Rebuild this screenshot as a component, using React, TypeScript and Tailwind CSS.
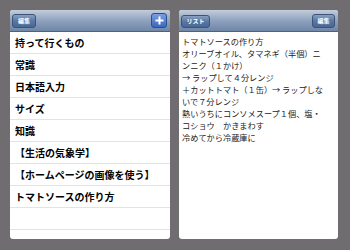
import React from "react";

const font = { fontFamily: '"Noto Sans CJK JP", "Noto Sans", sans-serif' };

function NavButton({ label, className }: { label: string; className: string }) {
  return (
    <div
      className={`flex items-center justify-center rounded-[3px] border border-[#3d5478] bg-gradient-to-b from-[#8aa0c0] via-[#5a76a3] to-[#4a6694] text-white text-[6px] font-bold leading-none ${className}`}
    >
      {label}
    </div>
  );
}

const items = [
  "持って行くもの",
  "常識",
  "日本語入力",
  "サイズ",
  "知識",
  "【生活の気象学】",
  "【ホームページの画像を使う】",
  "トマトソースの作り方",
  "",
  "",
];

const lines = [
  "トマトソースの作り方",
  "オリーブオイル、タマネギ（半個）ニ",
  "ンニク（１かけ）",
  "→ ラップして４分レンジ",
  "＋カットトマト（１缶）→ ラップしな",
  "いで７分レンジ",
  "熱いうちにコンソメスープ１個、塩・",
  "コショウ　かきまわす",
  "冷めてから冷蔵庫に",
];

export default function App() {
  return (
    <div
      className="w-[350px] h-[250px] bg-[#6f6d6f] flex gap-[9px] pt-[10px] pl-[10px]"
      style={font}
    >
      <div className="w-[160px] h-[229px] bg-white rounded-[3px] overflow-hidden flex flex-col">
        <div className="h-[22px] shrink-0 flex items-center justify-between pl-[2px] pr-[3px] bg-gradient-to-b from-[#c3cddb] via-[#8fa2be] to-[#6f86a6] border-b border-[#4d6182]">
          <NavButton label="編集" className="w-[24px] h-[14px]" />
          <div className="w-[16px] h-[15px] rounded-[3px] border border-[#2f4f8a] bg-gradient-to-b from-[#7b9fe0] to-[#3a67c0] flex items-center justify-center">
            <svg width="9" height="9" viewBox="0 0 9 9">
              <rect x="3.5" y="0.5" width="2" height="8" fill="white" />
              <rect x="0.5" y="3.5" width="8" height="2" fill="white" />
            </svg>
          </div>
        </div>
        {items.map((t, i) => (
          <div
            key={i}
            className="h-[22px] shrink-0 border-b border-[#e3e3e3] flex items-center pl-[5px] text-[10px] font-bold text-black whitespace-nowrap leading-none"
          >
            {t}
          </div>
        ))}
      </div>
      <div className="w-[159px] h-[229px] bg-white rounded-[3px] overflow-hidden flex flex-col">
        <div className="h-[22px] shrink-0 flex items-center justify-between pl-[2px] pr-[3px] bg-gradient-to-b from-[#c3cddb] via-[#8fa2be] to-[#6f86a6] border-b border-[#4d6182]">
          <NavButton label="リスト" className="w-[29px] h-[13px] mt-[1px]" />
          <NavButton label="編集" className="w-[23px] h-[14px]" />
        </div>
        <div className="pt-[3px] pl-[3px] text-[8.2px] leading-[12px] text-[#222] whitespace-nowrap">
          {lines.map((l, i) => (
            <div key={i}>{l}</div>
          ))}
        </div>
      </div>
    </div>
  );
}
